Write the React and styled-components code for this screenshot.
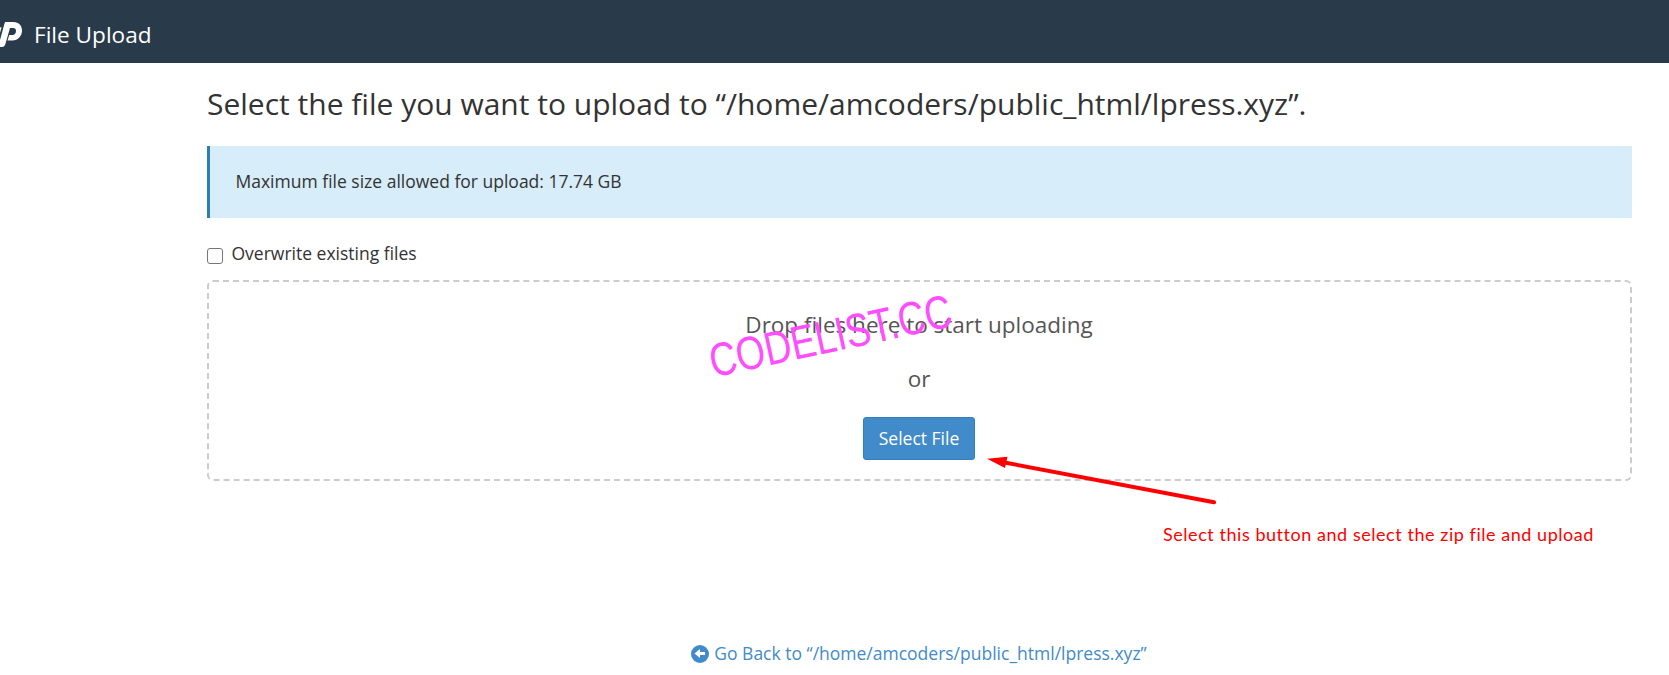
import React from "react";
import styled, { createGlobalStyle } from "styled-components";

const GlobalStyle = createGlobalStyle`
  *, *::before, *::after { box-sizing: border-box; }
  body {
    margin: 0;
    background: #fff;
    color: #333;
    font-family: "Open Sans", "Noto Sans", sans-serif;
    font-size: 17.5px;
    line-height: 25px;
    overflow: hidden;
  }
`;

const Page = styled.div`
  position: relative;
  height: 675px;
  overflow: hidden;
`;

const Header = styled.header`
  display: flex;
  align-items: center;
  height: 63px;
  padding-top: 5px;
  gap: 12px;
  background: #293a4a;
  color: #fff;
`;

const Logo = styled.svg`
  display: block;
  width: 22px;
  height: 26px;
  fill: #fff;
`;

const AppName = styled.span`
  padding-top: 1px;
  font-size: 22.6px;
  line-height: 32px;
`;

const Content = styled.main`
  display: flex;
  flex-direction: column;
  padding: 24px 37px 0 207px;
`;

const Heading = styled.h1`
  margin: 0 0 25px;
  font-size: 30px;
  font-weight: 400;
  line-height: 34px;
  white-space: nowrap;
`;

const Notice = styled.div`
  display: flex;
  align-items: center;
  height: 72px;
  padding: 0 0 2px 25.5px;
  border-left: 3px solid #2980b9;
  background: #d7edf9;
`;

const OverwriteLabel = styled.label`
  display: flex;
  align-items: flex-start;
  gap: 8.5px;
  height: 39px;
  margin-top: 23px;
`;

const Checkbox = styled.input`
  appearance: none;
  width: 16px;
  height: 16px;
  margin: 7px 0 0;
  border: 1px solid #767676;
  border-radius: 3px;
  background: #fff;
`;

const DropZone = styled.section`
  display: flex;
  flex-direction: column;
  align-items: center;
  height: 201px;
  padding: 27px 1px 0 0;
  border: 2px dashed #ccc;
  border-radius: 6px;
`;

const DropText = styled.p`
  margin: 0 0 22px;
  color: #555;
  font-size: 22.5px;
  line-height: 32px;
`;

const SelectButton = styled.button`
  width: 112px;
  height: 43px;
  padding: 0;
  border: 1px solid #357ebd;
  border-radius: 3px;
  background: #428bca;
  color: #fff;
  font: inherit;
`;

const BackLink = styled.a`
  display: flex;
  align-items: center;
  align-self: center;
  gap: 5px;
  margin: 160px 1px 0 0;
  color: #428bca;
  text-decoration: none;
`;

const BackIcon = styled.svg`
  width: 18px;
  height: 18px;
`;

const Watermark = styled.div`
  position: absolute;
  left: 675px;
  top: 311.5px;
  color: #ff4dff;
  font: 47px/48px "Liberation Sans", Arial, sans-serif;
  white-space: nowrap;
  transform: rotate(-12.1deg) scaleX(0.793);
  transform-origin: center;
`;

const Arrow = styled.svg`
  position: absolute;
  left: 980px;
  top: 450px;
  width: 245px;
  height: 60px;
`;

const Annotation = styled.div`
  position: absolute;
  left: 1163px;
  top: 522px;
  color: #f00;
  font-family: Lato, "Open Sans", sans-serif;
  font-size: 18px;
  letter-spacing: 0.545px;
  white-space: nowrap;
`;

export default function App() {
  return (
    <Page>
      <GlobalStyle />
      <Header>
        <Logo viewBox="0 0 22 26" aria-hidden="true">
          <path d="M0 6.5L1.6 6L0 12Z" />
          <path
            fillRule="evenodd"
            d="M5.6 1H13.5C19 1 22 4.700 22 9.500C22 15 18 19.500 12.500 19.500H7.500L9.300 14H12.500C14.800 14 16 12.300 16 10C16 8 15 7 13 7H10L5.400 23C4.800 25 3.700 26 2 26H0V19L4.500 2.500C4.700 1.600 5 1 5.600 1Z"
          />
        </Logo>
        <AppName>File Upload</AppName>
      </Header>
      <Content>
        <Heading>Select the file you want to upload to “/home/amcoders/public_html/lpress.xyz”.</Heading>
        <Notice>Maximum file size allowed for upload: 17.74 GB</Notice>
        <OverwriteLabel>
          <Checkbox type="checkbox" />
          <span>Overwrite existing files</span>
        </OverwriteLabel>
        <DropZone>
          <DropText>Drop files here to start uploading</DropText>
          <DropText>or</DropText>
          <SelectButton type="button">Select File</SelectButton>
        </DropZone>
        <BackLink href="#">
          <BackIcon viewBox="0 0 18 18" aria-hidden="true">
            <circle cx="9" cy="9" r="9" fill="#428bca" />
            <path d="M3.500 8.500L9 4V7H14V10H9V13Z" fill="#fff" />
          </BackIcon>
          <span>Go Back to “/home/amcoders/public_html/lpress.xyz”</span>
        </BackLink>
      </Content>
      <Watermark>CODELIST.CC</Watermark>
      <Arrow viewBox="0 0 245 60" aria-hidden="true">
        <path d="M22 12L234 52.300" stroke="#f00" strokeWidth="4" strokeLinecap="round" />
        <path d="M7 8.800L27.500 6.800L25 18Z" fill="#f00" />
      </Arrow>
      <Annotation>Select this button and select the zip file and upload</Annotation>
    </Page>
  );
}
